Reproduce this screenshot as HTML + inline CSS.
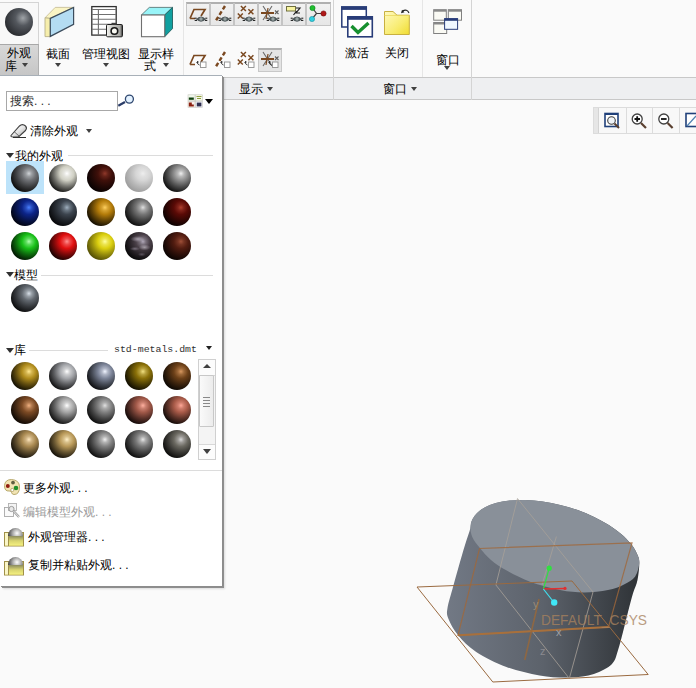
<!DOCTYPE html>
<html><head><meta charset="utf-8">
<style>
*{box-sizing:border-box}
html,body{margin:0;padding:0}
body{width:696px;height:688px;overflow:hidden;position:relative;background:#fafafa;font-family:"Liberation Sans",sans-serif;font-size:12px;color:#000;-webkit-font-smoothing:antialiased}
.a{position:absolute}
.t{position:absolute;white-space:nowrap;font-size:12px;line-height:12px}
.arr{position:absolute;width:0;height:0;border-left:3.5px solid transparent;border-right:3.5px solid transparent;border-top:4px solid #404040}
.tri{position:absolute;width:0;height:0;border-left:4px solid transparent;border-right:4px solid transparent;border-top:5px solid #303030}
.sp{position:absolute;width:28px;height:28px;border-radius:50%}
</style></head><body>
<!-- ribbon -->
<div class="a" style="left:0;top:77px;width:696px;height:23px;background:#eeeff1;border-top:1px solid #c8c8c8;border-bottom:1px solid #c8c8c8"></div>
<div class="a" style="left:183px;top:0;width:1px;height:77px;background:#e6e6e6"></div>
<div class="a" style="left:333px;top:0;width:1px;height:100px;background:#d4d4d4"></div>
<div class="a" style="left:422px;top:0;width:1px;height:77px;background:#e6e6e6"></div>
<div class="a" style="left:471px;top:0;width:1px;height:100px;background:#d4d4d4"></div>

<!-- pressed appearance button -->
<div class="a" style="left:0;top:2px;width:39px;height:43px;background:#f8f8f8;border:1px solid #d4d4d4;border-left:none"></div>
<div class="a" style="left:0;top:44px;width:39px;height:31px;background:linear-gradient(#d8d8d8,#c6c6c6);border-top:1px solid #a8a8a8;border-right:1px solid #b0b0b0"></div>
<div class="sp" style="left:5px;top:8px;background:radial-gradient(circle at 64% 36%,#a0a4a8 0%,#54585e 30%,#2a2c30 75%,#1a1a1c 100%)"></div>
<div class="t" style="left:7px;top:47px">外观</div>
<div class="t" style="left:5px;top:60px">库</div>
<div class="arr" style="left:22px;top:63px"></div>

<!-- section -->
<svg class="a" style="left:40px;top:2px" width="40" height="38" viewBox="40 2 40 38">
<path d="M45 17.8 L55.2 7.4 L73.6 7.4 L50.3 18.4 Z" fill="#faf4c4" stroke="#c8c098" stroke-width="0.9"/>
<path d="M45 17.8 L50.3 18.4 L50.3 36.6 L45 36.6 Z" fill="#f6eeac" stroke="#b8b088" stroke-width="0.9"/>
<path d="M50.3 18.4 L73.6 7.4 L73.6 24.4 L50.3 36.4 Z" fill="#b4dcf2" stroke="#3c4c5c" stroke-width="1.2"/>
</svg>
<div class="t" style="left:46px;top:48px">截面</div>
<div class="arr" style="left:55px;top:63px"></div>

<!-- manage views -->
<svg class="a" style="left:86px;top:2px" width="40" height="38" viewBox="86 2 40 38">
<defs><linearGradient id="cam" x1="0" y1="0" x2="1" y2="0"><stop offset="0" stop-color="#f4f4f0"/><stop offset="0.4" stop-color="#c8c8c4"/><stop offset="0.85" stop-color="#a8a8a4"/><stop offset="1" stop-color="#303030"/></linearGradient></defs>
<rect x="91.8" y="6.6" width="24.4" height="28.5" fill="#fff" stroke="#303030" stroke-width="1.3"/>
<path d="M92 9.5H116M92 14.5H116M92 19.3H116M92 24.3H116M92 29.3H116M98.4 9.5V35" stroke="#707070" stroke-width="1.1"/>
<rect x="106.5" y="24.5" width="16" height="12.3" rx="1.2" fill="url(#cam)" stroke="#202020" stroke-width="1"/>
<rect x="111.5" y="22.8" width="5" height="2" fill="#404040"/>
<circle cx="114.4" cy="31" r="3.3" fill="#fbfbf4" stroke="#181818" stroke-width="1.6"/>
</svg>
<div class="t" style="left:82px;top:48px">管理视图</div>
<div class="arr" style="left:103px;top:63px"></div>

<!-- display style -->
<svg class="a" style="left:136px;top:2px" width="42" height="38" viewBox="136 2 42 38">
<path d="M141.4 15 L149.3 7.4 L172.5 7.4 L164.7 15 Z" fill="#98f4f8" stroke="#5a7878" stroke-width="0.9"/>
<path d="M164.7 15 L172.5 7.4 L172.5 28.6 L164.7 36.7 Z" fill="#10a0a0" stroke="#206060" stroke-width="0.9"/>
<rect x="141.5" y="15" width="23.2" height="21.7" fill="#fff" stroke="#707070" stroke-width="1.1"/>
</svg>
<div class="t" style="left:138px;top:48px">显示样</div>
<div class="t" style="left:144px;top:60px">式</div>
<div class="arr" style="left:163px;top:63px"></div>

<!-- icon grid -->
<div class="a" style="left:186px;top:2px;width:145px;height:24px;background:linear-gradient(#f2f2f2,#e6e6e6);border:1px solid #c4c4c4;border-top:2px solid #b0b0b0"></div>
<div class="a" style="left:209px;top:3px;width:2px;height:23px;background:#c4c4c4"></div>
<div class="a" style="left:233px;top:3px;width:2px;height:23px;background:#c4c4c4"></div>
<div class="a" style="left:257px;top:3px;width:2px;height:23px;background:#c4c4c4"></div>
<div class="a" style="left:281px;top:3px;width:2px;height:23px;background:#c4c4c4"></div>
<div class="a" style="left:305px;top:3px;width:2px;height:23px;background:#c4c4c4"></div>
<div class="a" style="left:258px;top:48px;width:24px;height:24px;background:#e4e4e4;border:1px solid #c8c8c8;border-top:2px solid #b0b0b0"></div>
<svg class="a" style="left:0;top:0" width="340" height="76" viewBox="0 0 340 76">
<g transform="translate(186,2)"><path d="M4 16.5 L8 7.5 L19 7.5 L15 14 M4 16.5 H9" fill="none" stroke="#7a4820" stroke-width="1.7"/><g transform="translate(15,17)"><path d="M-5 0.3 Q0 -5.2 5 0.3 Q0 5.2 -5 0.3Z" fill="#4e585a"/><circle cx="0" cy="0" r="1.7" fill="#98a4a4"/><path d="M-6.3 -0.8 h2 M-6.3 1.4 h2.3 M4.3 -0.8 h2 M4 1.4 h2.3" stroke="#101010" stroke-width="1"/></g></g>
<g transform="translate(210,2)"><path d="M15 4 L5 20" fill="none" stroke="#7a4820" stroke-width="2.4" stroke-dasharray="4 2.4"/><g transform="translate(15,17)"><path d="M-5 0.3 Q0 -5.2 5 0.3 Q0 5.2 -5 0.3Z" fill="#4e585a"/><circle cx="0" cy="0" r="1.7" fill="#98a4a4"/><path d="M-6.3 -0.8 h2 M-6.3 1.4 h2.3 M4.3 -0.8 h2 M4 1.4 h2.3" stroke="#101010" stroke-width="1"/></g></g>
<g transform="translate(234,2)"><path d="M6.9 4 l5 5 M11.9 4 l-5 5" stroke="#7a4820" stroke-width="1.5"/><path d="M14.4 7.2 l5 5 M19.4 7.2 l-5 5" stroke="#7a4820" stroke-width="1.5"/><path d="M3.8 11.5 l5 5 M8.8 11.5 l-5 5" stroke="#7a4820" stroke-width="1.5"/><g transform="translate(15,17)"><path d="M-5 0.3 Q0 -5.2 5 0.3 Q0 5.2 -5 0.3Z" fill="#4e585a"/><circle cx="0" cy="0" r="1.7" fill="#98a4a4"/><path d="M-6.3 -0.8 h2 M-6.3 1.4 h2.3 M4.3 -0.8 h2 M4 1.4 h2.3" stroke="#101010" stroke-width="1"/></g></g>
<g transform="translate(258,2)"><path d="M5 4 L14 18 M14 4 L5 18" stroke="#6a6a6a" stroke-width="1.1"/><path d="M3 11 H16" stroke="#7a4820" stroke-width="2"/><path d="M10 6 L8 17" stroke="#7a4820" stroke-width="1.2"/><path d="M17 8.5 l3.5 3.5 M20.5 8.5 l-3.5 3.5" stroke="#606060" stroke-width="1.1"/><g transform="translate(15,17)"><path d="M-5 0.3 Q0 -5.2 5 0.3 Q0 5.2 -5 0.3Z" fill="#4e585a"/><circle cx="0" cy="0" r="1.7" fill="#98a4a4"/><path d="M-6.3 -0.8 h2 M-6.3 1.4 h2.3 M4.3 -0.8 h2 M4 1.4 h2.3" stroke="#101010" stroke-width="1"/></g></g>
<g transform="translate(282,2)"><rect x="4.5" y="4.5" width="9" height="4.5" fill="#f8f4a0" stroke="#707040"/><path d="M14 6 H18 L14 11 H18 M14.5 9 L11.5 13" stroke="#202020" stroke-width="1.2" fill="none"/><g transform="translate(15,17)"><path d="M-5 0.3 Q0 -5.2 5 0.3 Q0 5.2 -5 0.3Z" fill="#4e585a"/><circle cx="0" cy="0" r="1.7" fill="#98a4a4"/><path d="M-6.3 -0.8 h2 M-6.3 1.4 h2.3 M4.3 -0.8 h2 M4 1.4 h2.3" stroke="#101010" stroke-width="1"/></g></g>
<g transform="translate(306,2)"><path d="M6.5 6 L10.5 11.5 L6 17 M10.5 11.5 H17" stroke="#404040" stroke-width="1.2" fill="none"/><circle cx="6.5" cy="6" r="2.6" fill="#20c030" stroke="#108020" stroke-width=".6"/><circle cx="6" cy="17" r="2.6" fill="#30d0e0" stroke="#1890a0" stroke-width=".6"/><circle cx="17.5" cy="11.5" r="2.6" fill="#b01818" stroke="#700808" stroke-width=".6"/></g>
<g transform="translate(186,48)"><path d="M4 16.5 L8 7.5 L19 7.5 L15 14 M4 16.5 H9" fill="none" stroke="#7a4820" stroke-width="1.7"/><rect x="14.5" y="14" width="5.5" height="5.5" fill="#fff" stroke="#909090" stroke-width="0.9"/><path d="M13.5 17 Q10.5 16 11.5 13.5 M11.5 13.5 l-1 1.2 M11.5 13.5 l1.2 0.6" stroke="#202020" stroke-width="0.9" fill="none"/></g>
<g transform="translate(210,48)"><path d="M15 4 L5 20" fill="none" stroke="#7a4820" stroke-width="2.4" stroke-dasharray="4 2.4"/><rect x="14.5" y="14" width="5.5" height="5.5" fill="#fff" stroke="#909090" stroke-width="0.9"/><path d="M13.5 17 Q10.5 16 11.5 13.5 M11.5 13.5 l-1 1.2 M11.5 13.5 l1.2 0.6" stroke="#202020" stroke-width="0.9" fill="none"/></g>
<g transform="translate(234,48)"><path d="M6.9 4 l5 5 M11.9 4 l-5 5" stroke="#7a4820" stroke-width="1.5"/><path d="M14.4 7.2 l5 5 M19.4 7.2 l-5 5" stroke="#7a4820" stroke-width="1.5"/><path d="M3.8 11.5 l5 5 M8.8 11.5 l-5 5" stroke="#7a4820" stroke-width="1.5"/><rect x="14.5" y="14" width="5.5" height="5.5" fill="#fff" stroke="#909090" stroke-width="0.9"/><path d="M13.5 17 Q10.5 16 11.5 13.5 M11.5 13.5 l-1 1.2 M11.5 13.5 l1.2 0.6" stroke="#202020" stroke-width="0.9" fill="none"/></g>
<g transform="translate(258,48)"><path d="M5 4 L14 18 M14 4 L5 18" stroke="#6a6a6a" stroke-width="1.1"/><path d="M3 11 H16" stroke="#7a4820" stroke-width="2"/><path d="M10 6 L8 17" stroke="#7a4820" stroke-width="1.2"/><path d="M17 8.5 l3.5 3.5 M20.5 8.5 l-3.5 3.5" stroke="#606060" stroke-width="1.1"/><rect x="14.5" y="14" width="5.5" height="5.5" fill="#fff" stroke="#909090" stroke-width="0.9"/><path d="M13.5 17 Q10.5 16 11.5 13.5 M11.5 13.5 l-1 1.2 M11.5 13.5 l1.2 0.6" stroke="#202020" stroke-width="0.9" fill="none"/></g>
</svg>

<!-- activate / close / window -->
<svg class="a" style="left:336px;top:0" width="136" height="44" viewBox="336 0 136 44">
<defs><linearGradient id="fy" x1="0" y1="0" x2="1" y2="1"><stop offset="0" stop-color="#fffac0"/><stop offset="0.6" stop-color="#f8ec70"/><stop offset="1" stop-color="#f0dc30"/></linearGradient></defs>
<rect x="341.8" y="7" width="24.5" height="20" fill="#fff" stroke="#283c78" stroke-width="1.5"/>
<rect x="341" y="6.3" width="26" height="3.6" fill="#283c78"/>
<rect x="347.8" y="16.8" width="24.5" height="20" fill="#fff" stroke="#283c78" stroke-width="1.6"/>
<rect x="347" y="16" width="26" height="3.8" fill="#283c78"/>
<path d="M351.5 26 L358 32.5 L368.5 23" stroke="#189030" stroke-width="3.4" fill="none"/>
<path d="M384.5 34.5 V11.5 H393 L397 15.2 H409.3 V34.5 Z" fill="url(#fy)" stroke="#c8b040"/>
<path d="M384.5 15.5 H409" stroke="#e8d860" stroke-width="0.8"/>
<path d="M409 13 Q407 8.5 402.5 11" stroke="#202020" stroke-width="1.1" fill="none"/>
<path d="M401 13.2 L402 9.8 L404.5 12.2 Z" fill="#202020"/>
<rect x="433.7" y="9.7" width="12.6" height="10.5" fill="#fafaf4" stroke="#808080"/>
<rect x="433.7" y="9.7" width="12.6" height="2" fill="#888"/>
<rect x="448.3" y="9.7" width="13.2" height="10.5" fill="#fafaf4" stroke="#808080"/>
<rect x="448.3" y="9.7" width="13.2" height="2" fill="#888"/>
<rect x="433.7" y="22.5" width="13" height="11" fill="#fafaf4" stroke="#808080"/>
<rect x="433.7" y="22.5" width="13" height="2" fill="#888"/>
<rect x="444.6" y="18.6" width="13" height="10.7" fill="#f0f8ff" stroke="#283c78"/>
<rect x="444.6" y="18.6" width="13" height="2.2" fill="#283c78"/>
</svg>
<div class="t" style="left:345px;top:47px">激活</div>
<div class="t" style="left:385px;top:47px">关闭</div>
<div class="t" style="left:436px;top:54px">窗口</div>
<div class="arr" style="left:444px;top:66px"></div>

<!-- group labels -->
<div class="t" style="left:239px;top:83px">显示</div>
<div class="arr" style="left:267px;top:87px"></div>
<div class="t" style="left:383px;top:83px">窗口</div>
<div class="arr" style="left:411px;top:87px"></div>

<!-- view toolbar -->
<div class="a" style="left:593px;top:107px;width:103px;height:27px;background:#f8f8f8;border:1px solid #dcdcdc;border-right:none"></div>
<div class="a" style="left:594px;top:108px;width:5px;height:25px;background:#e6e6e6;border-right:1px solid #d4d4d4"></div>
<div class="a" style="left:626px;top:108px;width:1px;height:25px;background:#dcdcdc"></div>
<div class="a" style="left:652px;top:108px;width:1px;height:25px;background:#dcdcdc"></div>
<div class="a" style="left:679px;top:108px;width:1px;height:25px;background:#dcdcdc"></div>
<svg class="a" style="left:600px;top:108px" width="96" height="26" viewBox="600 108 96 26">
<rect x="605" y="113.5" width="13" height="13" fill="#fff" stroke="#20407a" stroke-width="1.6"/>
<rect x="605" y="113" width="13" height="2" fill="#20407a"/>
<circle cx="611.5" cy="120.5" r="3.8" fill="#f0f4f8" stroke="#404040" stroke-width="1.1"/>
<path d="M614.5 123.5 L619 128" stroke="#5a4030" stroke-width="2"/>
<circle cx="637.2" cy="119" r="5" fill="#fff" stroke="#404040" stroke-width="1.3"/>
<path d="M634.5 119 H640 M637.2 116.3 V121.7" stroke="#101010" stroke-width="1.8"/>
<path d="M641 123 L646 128" stroke="#5a4030" stroke-width="2.2"/>
<circle cx="663.8" cy="119" r="5" fill="#fff" stroke="#404040" stroke-width="1.3"/>
<path d="M661 119 H666.6" stroke="#101010" stroke-width="1.8"/>
<path d="M667.6 123 L672.6 128" stroke="#5a4030" stroke-width="2.2"/>
<rect x="686" y="113.5" width="14" height="13" fill="#fff" stroke="#20407a" stroke-width="1.6"/>
<path d="M687 126 L696 116" stroke="#5080b0" stroke-width="1.2"/>
</svg>

<!-- cylinder -->
<svg class="a" style="left:0;top:0" width="696" height="688" viewBox="0 0 696 688">
<defs>
<linearGradient id="side" x1="446" y1="0" x2="640" y2="0" gradientUnits="userSpaceOnUse">
<stop offset="0" stop-color="#727985"/><stop offset="0.5" stop-color="#5c626b"/><stop offset="1" stop-color="#2e3236"/>
</linearGradient>
</defs>
<path d="M525.5,500.0 C531.0,500.2 536.8,500.7 542.6,501.5 C548.4,502.3 554.4,503.5 560.2,504.9 C566.1,506.3 572.0,508.1 577.7,510.1 C583.3,512.1 588.9,514.4 594.1,516.9 C599.3,519.4 604.3,522.2 608.8,525.0 C613.3,527.9 617.5,530.9 621.1,534.0 C624.8,537.1 628.0,540.4 630.6,543.6 C633.2,546.7 635.3,550.0 636.7,553.2 C638.2,556.4 639.2,558.1 639.3,562.6 C639.4,567.0 638.5,574.9 637.5,580.0 C636.5,585.1 634.7,587.7 633.1,593.0 C631.5,598.3 629.7,605.5 628.0,612.0 C626.3,618.5 624.7,625.6 623.0,632.0 C621.3,638.4 619.8,645.0 618.0,650.3 C616.2,655.6 616.0,660.0 612.0,663.9 C608.0,667.8 600.9,671.6 593.9,673.9 C586.9,676.2 578.8,677.2 569.8,677.5 C560.8,677.8 550.2,677.1 539.6,675.4 C529.0,673.6 517.0,670.9 506.4,667.0 C495.8,663.1 484.2,657.2 476.2,651.9 C468.1,646.6 462.7,640.8 458.1,635.3 C453.5,629.8 450.2,623.2 448.4,618.7 C446.6,614.2 446.7,613.4 447.5,608.1 C448.3,602.8 451.1,594.1 453.0,587.0 C454.9,579.9 457.0,572.6 459.0,565.6 C461.0,558.6 463.1,551.2 465.0,545.0 C466.9,538.8 469.3,532.3 470.4,528.3 C471.5,524.4 470.6,523.7 471.6,521.2 C472.6,518.8 474.2,515.9 476.4,513.7 C478.5,511.4 481.3,509.3 484.6,507.5 C487.8,505.8 491.6,504.3 495.8,503.1 C500.0,502.0 504.7,501.1 509.7,500.6 C514.6,500.1 520.0,499.9 525.5,500.0Z" fill="url(#side)"/>
<path d="M470.4,528.3 C470.3,525.6 470.6,523.7 471.6,521.2 C472.6,518.8 474.2,515.9 476.4,513.7 C478.5,511.4 481.3,509.3 484.6,507.5 C487.8,505.8 491.6,504.3 495.8,503.1 C500.0,502.0 504.7,501.1 509.7,500.6 C514.6,500.1 520.0,499.9 525.5,500.0 C531.0,500.2 536.8,500.7 542.6,501.5 C548.4,502.3 554.4,503.5 560.2,504.9 C566.1,506.3 572.0,508.1 577.7,510.1 C583.3,512.1 588.9,514.4 594.1,516.9 C599.3,519.4 604.3,522.2 608.8,525.0 C613.3,527.9 617.5,530.9 621.1,534.0 C624.8,537.1 628.0,540.4 630.6,543.6 C633.2,546.7 635.3,550.0 636.7,553.2 C638.2,556.4 639.6,558.7 639.3,562.6 C639.1,566.4 637.8,572.8 635.2,576.4 C632.6,580.0 628.5,582.1 624.0,584.4 C619.5,586.7 614.7,588.7 608.0,590.0 C601.3,591.3 592.0,592.4 584.0,592.4 C576.0,592.4 569.0,591.8 560.0,590.0 C551.0,588.2 539.0,585.0 530.0,581.7 C521.0,578.4 512.7,573.9 506.2,570.3 C499.7,566.7 495.4,563.8 491.0,560.0 C486.6,556.2 482.8,551.5 479.7,547.7 C476.6,544.0 474.0,540.7 472.5,537.5 C471.0,534.3 470.6,531.1 470.4,528.3Z" fill="#899099"/>
<g fill="none" stroke-width="1">
<path d="M517.5 498.6 L593 592 L569.3 678.5 L495.9 585 Z M556.4 536.5 L542 585" stroke="#a8a098" opacity="0.8"/>
<path d="M417 587 L572 581 L648.2 674.5 L492.8 682 Z" stroke="#9a6a40"/>
<path d="M479.5 548.5 L632 542.8 L608.5 627 L458 635.3 Z" stroke="#a0683a" stroke-width="1.2" opacity="0.8"/>
<path d="M458 635.3 L608.5 627" stroke="#a8703c" stroke-width="2"/>
<path d="M539 599 L524.7 660" stroke="#9a6838" stroke-width="1.6" opacity="0.8"/>
</g>
<path d="M543.4 589 L549.2 568.2" stroke="#30e040" stroke-width="1.2"/>
<circle cx="549.2" cy="568.2" r="2.6" fill="#30e040"/>
<path d="M543.4 589 L565 588.4" stroke="#e03030" stroke-width="1.5"/>
<circle cx="565" cy="588.4" r="1.6" fill="#e03030"/>
<path d="M543.4 589 L554 602.5" stroke="#40e0f0" stroke-width="1.2"/>
<circle cx="554.2" cy="602.5" r="3.2" fill="#40e8f8"/>
<text x="541" y="625" font-family="Liberation Sans" font-size="15" fill="#a8825e" opacity="0.78" textLength="106" lengthAdjust="spacingAndGlyphs">DEFAULT_CSYS</text>
<text x="533" y="608" font-family="Liberation Sans" font-size="11" fill="#9a8a78">y</text>
<text x="556" y="636" font-family="Liberation Sans" font-size="11" fill="#a0a0a4">x</text>
<text x="540" y="655" font-family="Liberation Sans" font-size="11" fill="#8a8a90">z</text>
</svg>

<!-- dropdown panel -->
<div class="a" style="left:0;top:75px;width:222px;height:511px;background:#fff;border-top:1px solid #a8b0b8;box-shadow:1px 1px 0 #8c8c8c,2px 2px 0 #8e8e8e,3px 3px 2px rgba(0,0,0,0.13)"></div>
<div class="a" style="left:6px;top:91px;width:112px;height:20px;border:1px solid #a8a8a8;background:#fff"></div>
<div class="t" style="left:10px;top:95px;color:#303030">搜索. . .</div>
<svg class="a" style="left:112px;top:88px" width="24" height="24" viewBox="112 88 24 24">
<path d="M118.3 105.8 L125 102" stroke="#2a3c68" stroke-width="2.2"/>
<circle cx="129.4" cy="99.1" r="4" fill="#e4f2ff" stroke="#304870" stroke-width="1.3"/>
</svg>
<svg class="a" style="left:187px;top:94px" width="17" height="15" viewBox="187 94 17 15">
<rect x="188" y="94.8" width="7" height="6" fill="#f0f8ec" stroke="#c8c8c0" stroke-width="0.6"/>
<rect x="195.6" y="94.8" width="7" height="6" fill="#f4f8e8" stroke="#c8c8c0" stroke-width="0.6"/>
<rect x="188" y="101.4" width="7" height="6" fill="#faf0ec" stroke="#c8c8c0" stroke-width="0.6"/>
<rect x="195.6" y="101.4" width="7" height="6" fill="#f0f0f8" stroke="#c8c8c0" stroke-width="0.6"/>
<rect x="188.8" y="97.5" width="5" height="2.3" fill="#104010"/>
<path d="M196.5 96.5 h5 M197 98.5 h4" stroke="#90a040" stroke-width="1"/>
<path d="M188.8 102.5 h3 v2 h2 v2 h-5z" fill="#8a2010"/>
<rect x="196.8" y="102.6" width="4.6" height="3.8" fill="#303050"/>
</svg>
<div class="a" style="left:205px;top:99px;width:0;height:0;border-left:4px solid transparent;border-right:4px solid transparent;border-top:5px solid #000"></div>
<svg class="a" style="left:9px;top:123px" width="20" height="16" viewBox="0 0 20 16">
<defs><linearGradient id="er" x1="0" y1="0" x2="1" y2="1"><stop offset="0" stop-color="#ffffff"/><stop offset="0.5" stop-color="#e8e8e8"/><stop offset="1" stop-color="#9a9a9a"/></linearGradient></defs>
<path d="M2 12.5 L10.5 3 Q12.5 1 15 2 L16.5 3 Q18.5 5 16.5 7.5 L9.5 14 L4 14 Q1.5 14 2 12.5Z" fill="url(#er)" stroke="#404040" stroke-width="1.1"/>
<path d="M5 8.5 L10 13" stroke="#606060" stroke-width="0.9"/>
<path d="M4 14.5 H17" stroke="#303030" stroke-width="1"/>
</svg>
<div class="t" style="left:30px;top:125px">清除外观</div>
<div class="arr" style="left:86px;top:129px"></div>
<div class="tri" style="left:6px;top:153px"></div>
<div class="t" style="left:15px;top:150px">我的外观</div>
<div class="a" style="left:68px;top:155px;width:145px;height:1px;background:#dcdcdc"></div>
<div class="a" style="left:6px;top:161px;width:38px;height:33px;background:#bde3fa"></div>
<div class="sp" style="left:11px;top:164px;background:radial-gradient(circle at 64% 34%,#d0d4d8 0px,#9a9da1 3px,#6e7074 7px,#3d3e40 13px,#111111 19px)"></div>
<div class="sp" style="left:49px;top:164px;background:radial-gradient(circle at 64% 34%,#ffffff 0px,#e5e5df 3px,#d0d0c4 7px,#72726c 13px,#1f1f1d 19px)"></div>
<div class="sp" style="left:87px;top:164px;background:radial-gradient(circle at 64% 34%,#90382a 0px,#642218 3px,#40100a 7px,#230906 13px,#0a0202 19px)"></div>
<div class="sp" style="left:125px;top:164px;background:radial-gradient(circle at 64% 34%,#eeeeee 0px,#e1e1e1 3px,#d6d6d6 7px,#b9b9b9 13px,#9f9f9f 19px)"></div>
<div class="sp" style="left:163px;top:164px;background:radial-gradient(circle at 64% 34%,#f0f0f0 0px,#bababa 3px,#8e8e8e 7px,#4e4e4e 13px,#151515 19px)"></div>
<div class="sp" style="left:11px;top:198px;background:radial-gradient(circle at 64% 34%,#4a80ff 0px,#284dbe 3px,#0c2488 7px,#07144b 13px,#020514 19px)"></div>
<div class="sp" style="left:49px;top:198px;background:radial-gradient(circle at 64% 34%,#a0b0c0 0px,#697581 3px,#3c444e 7px,#21252b 13px,#090a0c 19px)"></div>
<div class="sp" style="left:87px;top:198px;background:radial-gradient(circle at 64% 34%,#ffd060 0px,#d6a231 3px,#b47c0a 7px,#634406 13px,#1b1302 19px)"></div>
<div class="sp" style="left:125px;top:198px;background:radial-gradient(circle at 64% 34%,#e0e0e0 0px,#a6a6a6 3px,#767676 7px,#414141 13px,#121212 19px)"></div>
<div class="sp" style="left:163px;top:198px;background:radial-gradient(circle at 64% 34%,#b04030 0px,#812219 3px,#5a0a06 7px,#320603 13px,#0e0201 19px)"></div>
<div class="sp" style="left:11px;top:232px;background:radial-gradient(circle at 64% 34%,#b0ffb0 0px,#5cdc5c 3px,#18c018 7px,#0d6a0d 13px,#041d04 19px)"></div>
<div class="sp" style="left:49px;top:232px;background:radial-gradient(circle at 64% 34%,#ff9090 0px,#ee4a4a 3px,#e01010 7px,#7b0909 13px,#220202 19px)"></div>
<div class="sp" style="left:87px;top:232px;background:radial-gradient(circle at 64% 34%,#ffffa0 0px,#ece551 3px,#dcd010 7px,#978e0b 13px,#595406 19px)"></div>
<div class="sp" style="left:125px;top:232px;background:radial-gradient(circle at 64% 34%,#b0a8b8 0px,#786f7a 3px,#4a4048 7px,#292328 13px,#0b0a0b 19px)"></div>
<div class="sp" style="left:163px;top:232px;background:radial-gradient(circle at 64% 34%,#a05038 0px,#753322 3px,#521c10 7px,#2d0f09 13px,#0c0402 19px)"></div>
<div class="sp" style="left:125px;top:232px;background:radial-gradient(ellipse 7px 3px at 45% 25%,rgba(230,225,240,.55),transparent),radial-gradient(ellipse 6px 3px at 70% 55%,rgba(240,235,245,.5),transparent),radial-gradient(ellipse 5px 2px at 35% 60%,rgba(200,190,210,.45),transparent),radial-gradient(ellipse 4px 2px at 60% 80%,rgba(180,170,190,.35),transparent)"></div>
<div class="tri" style="left:6px;top:272px"></div>
<div class="t" style="left:14px;top:269px">模型</div>
<div class="a" style="left:41px;top:275px;width:172px;height:1px;background:#dcdcdc"></div>
<div class="sp" style="left:11px;top:284px;background:radial-gradient(circle at 64% 34%,#d8e0e8 0px,#979ea5 3px,#62686f 7px,#36393d 13px,#0f1011 19px)"></div>
<div class="tri" style="left:6px;top:348px"></div>
<div class="t" style="left:14px;top:344px">库</div>
<div class="a" style="left:29px;top:350px;width:79px;height:1px;background:#dcdcdc"></div>
<div class="t" style="left:114px;top:345px;font-family:'Liberation Mono',monospace;font-size:9.9px;line-height:10px;color:#303030">std-metals.dmt</div>
<div class="a" style="left:206px;top:346px;width:0;height:0;border-left:3px solid transparent;border-right:3px solid transparent;border-top:4px solid #202020"></div>
<div class="a" style="left:198px;top:359px;width:18px;height:101px;background:#f4f4f4;border:1px solid #d0d0d0"></div>
<div class="a" style="left:199px;top:360px;width:16px;height:16px;background:#fcfcfc;border-bottom:1px solid #d8d8d8"></div>
<div class="a" style="left:203px;top:364px;width:0;height:0;border-left:4px solid transparent;border-right:4px solid transparent;border-bottom:4.5px solid #404040"></div>
<div class="a" style="left:199px;top:375px;width:15px;height:52px;background:linear-gradient(90deg,#fafafa,#ececec);border:1px solid #c8c8c8;border-radius:1px"></div>
<div class="a" style="left:203px;top:397px;width:7px;height:1px;background:#888;box-shadow:0 3px 0 #888,0 6px 0 #888,0 9px 0 #888"></div>
<div class="a" style="left:199px;top:444px;width:16px;height:15px;background:#fcfcfc;border-top:1px solid #d8d8d8"></div>
<div class="a" style="left:203px;top:449px;width:0;height:0;border-left:4px solid transparent;border-right:4px solid transparent;border-top:5px solid #404040"></div>
<div class="sp" style="left:11px;top:362px;background:radial-gradient(circle at 64% 34%,#ffe890 0px,#d4b550 3px,#b08c1c 7px,#614d0f 13px,#1a1504 19px)"></div>
<div class="sp" style="left:49px;top:362px;background:radial-gradient(circle at 64% 34%,#ffffff 0px,#cdced0 3px,#a4a6aa 7px,#5a5b5e 13px,#19191a 19px)"></div>
<div class="sp" style="left:87px;top:362px;background:radial-gradient(circle at 64% 34%,#f0f4ff 0px,#b0b6c6 3px,#7c8498 7px,#444954 13px,#131417 19px)"></div>
<div class="sp" style="left:125px;top:362px;background:radial-gradient(circle at 64% 34%,#f0e080 0px,#b8a23e 3px,#8a7008 7px,#4c3e04 13px,#151101 19px)"></div>
<div class="sp" style="left:163px;top:362px;background:radial-gradient(circle at 64% 34%,#d89860 0px,#9d6838 3px,#6c4018 7px,#3b230d 13px,#100a04 19px)"></div>
<div class="sp" style="left:11px;top:396px;background:radial-gradient(circle at 64% 34%,#f0b080 0px,#b0784d 3px,#7c4a24 7px,#442914 13px,#130b05 19px)"></div>
<div class="sp" style="left:49px;top:396px;background:radial-gradient(circle at 64% 34%,#ffffff 0px,#cdcdcd 3px,#a4a4a4 7px,#5a5a5a 13px,#191919 19px)"></div>
<div class="sp" style="left:87px;top:396px;background:radial-gradient(circle at 64% 34%,#e0e0e0 0px,#ababab 3px,#808080 7px,#464646 13px,#131313 19px)"></div>
<div class="sp" style="left:125px;top:396px;background:radial-gradient(circle at 64% 34%,#ffb0a0 0px,#cb8070 3px,#a05848 7px,#583028 13px,#180d0b 19px)"></div>
<div class="sp" style="left:163px;top:396px;background:radial-gradient(circle at 64% 34%,#ffa898 0px,#cf7d6c 3px,#a85a48 7px,#5c3228 13px,#190e0b 19px)"></div>
<div class="sp" style="left:11px;top:430px;background:radial-gradient(circle at 64% 34%,#ffe8c0 0px,#cfb382 3px,#a88850 7px,#5c4b2c 13px,#19140c 19px)"></div>
<div class="sp" style="left:49px;top:430px;background:radial-gradient(circle at 64% 34%,#fff0c8 0px,#d8c08a 3px,#b89858 7px,#655430 13px,#1c170d 19px)"></div>
<div class="sp" style="left:87px;top:430px;background:radial-gradient(circle at 64% 34%,#f0f0f0 0px,#b4b4b4 3px,#828282 7px,#484848 13px,#141414 19px)"></div>
<div class="sp" style="left:125px;top:430px;background:radial-gradient(circle at 64% 34%,#e8e8e8 0px,#aaaaaa 3px,#787878 7px,#424242 13px,#121212 19px)"></div>
<div class="sp" style="left:163px;top:430px;background:radial-gradient(circle at 64% 34%,#d8d8d8 0px,#9c9a96 3px,#6a6860 7px,#3a3935 13px,#10100e 19px)"></div>
<div class="a" style="left:0;top:470px;width:222px;height:1px;background:#dcdcdc"></div>
<svg class="a" style="left:3px;top:478px" width="18" height="18" viewBox="3 478 18 18">
<path d="M4.5 485.5 Q5 479.5 11.5 479.5 Q19.5 480 19.5 487 Q19.5 494.5 14 494.5 Q12 494.5 11.5 492.5 Q11 490.5 9 491 Q4.5 491.5 4.5 485.5Z" fill="#f2e4b4" stroke="#b0a060" stroke-width="0.9"/>
<circle cx="7.8" cy="486" r="2" fill="#901c10"/>
<circle cx="13" cy="482.6" r="1.9" fill="#606040"/>
<circle cx="16" cy="488" r="2.3" fill="#20902a"/>
<circle cx="12.3" cy="490" r="1.6" fill="#fff" stroke="#a09050" stroke-width="0.7"/>
</svg>
<div class="t" style="left:23px;top:482px">更多外观. . .</div>
<svg class="a" style="left:3px;top:502px" width="18" height="18" viewBox="3 502 18 18">
<rect x="4.5" y="507.5" width="9" height="9" fill="#fafafa" stroke="#a8a8a8" stroke-width="0.9"/>
<rect x="8.5" y="503.5" width="8" height="7" fill="#f4f4f4" stroke="#b0b0b0" stroke-width="0.9"/>
<circle cx="11.5" cy="509" r="2.6" fill="#e8e8e8" stroke="#909090" stroke-width="0.9"/>
<path d="M13.5 511 L19 517" stroke="#a0a0a0" stroke-width="2.4"/>
<path d="M13.5 511 L19 517" stroke="#f0f0f0" stroke-width="0.8"/>
</svg>
<div class="t" style="left:23px;top:506px;color:#9a9a9a">编辑模型外观. . .</div>
<svg class="a" style="left:3px;top:527px" width="22" height="20" viewBox="0 0 22 20">
<defs><radialGradient id="mg" cx="0.6" cy="0.35" r="0.6"><stop offset="0" stop-color="#ffffff"/><stop offset="0.5" stop-color="#a8a8a8"/><stop offset="1" stop-color="#404040"/></radialGradient>
<linearGradient id="my" x1="0" y1="0" x2="0" y2="1"><stop offset="0" stop-color="#8a8a60"/><stop offset="0.5" stop-color="#d8d470"/><stop offset="1" stop-color="#f4f080"/></linearGradient></defs>
<rect x="1.5" y="5.5" width="19" height="13.5" fill="#f0e878" stroke="#a09048"/>
<rect x="2" y="6" width="3" height="12.5" fill="#faf6c8"/>
<circle cx="12.5" cy="8.5" r="7.5" fill="url(#mg)"/>
<rect x="6" y="9" width="14" height="9.5" fill="url(#my)"/>
<path d="M5.5 9 V19" stroke="#a09048"/>
</svg>
<div class="t" style="left:28px;top:531px">外观管理器. . .</div>
<svg class="a" style="left:3px;top:556px" width="22" height="20" viewBox="0 0 22 20">
<defs><radialGradient id="mg" cx="0.6" cy="0.35" r="0.6"><stop offset="0" stop-color="#ffffff"/><stop offset="0.5" stop-color="#a8a8a8"/><stop offset="1" stop-color="#404040"/></radialGradient>
<linearGradient id="my" x1="0" y1="0" x2="0" y2="1"><stop offset="0" stop-color="#8a8a60"/><stop offset="0.5" stop-color="#d8d470"/><stop offset="1" stop-color="#f4f080"/></linearGradient></defs>
<rect x="1.5" y="5.5" width="19" height="13.5" fill="#f0e878" stroke="#a09048"/>
<rect x="2" y="6" width="3" height="12.5" fill="#faf6c8"/>
<circle cx="12.5" cy="8.5" r="7.5" fill="url(#mg)"/>
<rect x="6" y="9" width="14" height="9.5" fill="url(#my)"/>
<path d="M5.5 9 V19" stroke="#a09048"/>
</svg>
<div class="t" style="left:28px;top:559px">复制并粘贴外观. . .</div>
</body></html>
